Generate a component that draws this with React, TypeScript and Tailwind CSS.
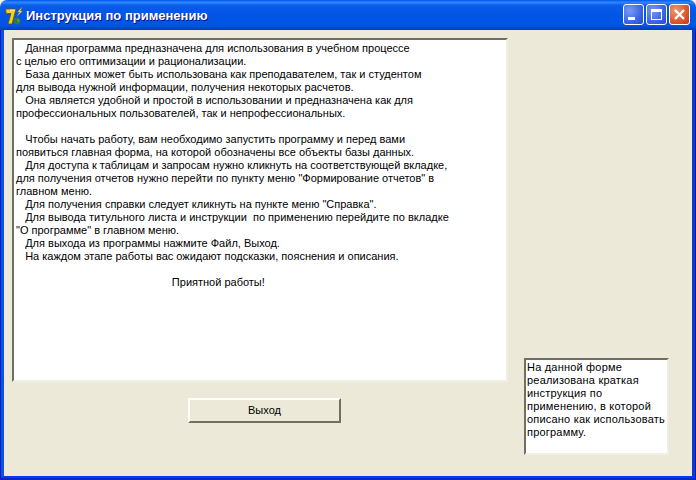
const lines = [
  "   Данная программа предназначена для использования в учебном процессе",
  "с целью его оптимизации и рационализации.",
  "   База данных может быть использована как преподавателем, так и студентом",
  "для вывода нужной информации, получения некоторых расчетов.",
  "   Она является удобной и простой в использовании и предназначена как для",
  "профессиональных пользователей, так и непрофессиональных.",
  " ",
  "   Чтобы начать работу, вам необходимо запустить программу и перед вами",
  "появиться главная форма, на которой обозначены все объекты базы данных.",
  "   Для доступа к таблицам и запросам нужно кликнуть на соответствующей вкладке,",
  "для получения отчетов нужно перейти по пункту меню \"Формирование отчетов\" в",
  "главном меню.",
  "   Для получения справки следует кликнуть на пункте меню \"Справка\".",
  "   Для вывода титульного листа и инструкции  по применению перейдите по вкладке",
  "\"О программе\" в главном меню.",
  "   Для выхода из программы нажмите Файл, Выход.",
  "   На каждом этапе работы вас ожидают подсказки, пояснения и описания.",
  " ",
  "                                                   Приятной работы!",
];

function Icon() {
  return (
    <svg width="18" height="18" viewBox="0 0 18 18" className="mt-[1px] -mr-[1px]">
      <circle cx="12" cy="14" r="3.4" fill="#2e7a4a" />
      <path d="M12 11.5 L15 13 L13 16 Z" fill="#7a8a3a" />
      <path d="M0.5 2 H11 L7 17 H3 L6 6.5 H2 L1.5 8 Z" fill="#f2d21a" stroke="#6a5200" strokeWidth="0.8" />
      <path d="M5 3.2 H9.8" stroke="#fff7a0" strokeWidth="1" />
      <path d="M17 0 L12.5 5 L14.5 5 L12 9.5 L17.5 4 L15.5 4 Z" fill="#f6ea20" stroke="#8a7a00" strokeWidth="0.4" />
    </svg>
  );
}

function CaptionButton({ kind }: { kind: "min" | "max" | "close" }) {
  const bg =
    kind === "close"
      ? "bg-[radial-gradient(circle_at_30%_30%,#ee9a78,#df5a30_55%,#c23a18)]"
      : "bg-[radial-gradient(circle_at_30%_30%,#7a9af0,#3a66e4_60%,#2348d0)]";
  return (
    <div className={`w-[21px] h-[21px] rounded-[3px] border border-white flex items-center justify-center ${bg}`}>
      {kind === "min" && <div className="w-[7px] h-[3px] bg-white mt-[8px] mr-[4px]" />}
      {kind === "max" && <div className="w-[11px] h-[11px] border border-white border-t-[3px]" />}
      {kind === "close" && (
        <svg width="13" height="13" viewBox="0 0 13 13">
          <path d="M2 2 L11 11 M11 2 L2 11" stroke="white" strokeWidth="2.4" />
        </svg>
      )}
    </div>
  );
}

export default function App() {
  return (
    <div className="w-[696px] h-[480px] flex flex-col overflow-hidden bg-[#f4f2ea] font-['Liberation_Sans',sans-serif] text-[11px] leading-[13px] text-black">
      <div className="h-[30px] shrink-0 flex items-center pl-[5px] pr-[6px] rounded-t-[7px] bg-[linear-gradient(180deg,#0058ee_0%,#2f86ff_8%,#0a5de8_18%,#0055e5_50%,#0055e5_85%,#0047cc_93%,#003dc0_100%)]">
        <Icon />
        <span className="ml-[4px] text-[13px] font-bold text-white [text-shadow:1px_1px_#0f1089]">
          Инструкция по применению
        </span>
        <div className="ml-auto flex gap-[2px] -mt-[1px]">
          <CaptionButton kind="min" />
          <CaptionButton kind="max" />
          <CaptionButton kind="close" />
        </div>
      </div>
      <div className="flex-1 min-h-0 border-l border-l-[#0019cf] border-r border-r-[#001ea0] border-b-2 border-b-[#0a28c0] flex flex-col">
        <div className="flex-1 min-h-0 border-l-[3px] border-l-[#0855dd] border-r-[3px] border-r-[#0a3ad0] border-b-2 border-b-[#0838f0] bg-[#ece9d8] flex pt-[8px] pl-[8px]">
          <div className="w-[496px] flex flex-col items-start">
            <div className="w-[496px] h-[344px] bg-white border-2 border-t-[#716f64] border-l-[#716f64] border-r-[#f1efe2] border-b-[#f1efe2] pl-[2px] pt-[2px] whitespace-pre">
              {lines.map((l, i) => (
                <div key={i}>{l}</div>
              ))}
            </div>
            <button className="mt-[16px] ml-[176px] w-[153px] h-[25px] bg-[#ece9d8] border-2 border-t-[#fffffb] border-l-[#fffffb] border-r-[#716f64] border-b-[#716f64] flex items-center justify-center">
              Выход
            </button>
          </div>
          <div className="ml-[16px] mt-[320px] w-[145px] h-[97px] bg-white border-2 border-t-[#716f64] border-l-[#716f64] border-r-[#f1efe2] border-b-[#f1efe2] pl-[1px] pt-[1px] tracking-[0.2px]">
            На данной форме реализована краткая инструкция по применению, в которой описано как использовать программу.
          </div>
        </div>
      </div>
    </div>
  );
}
